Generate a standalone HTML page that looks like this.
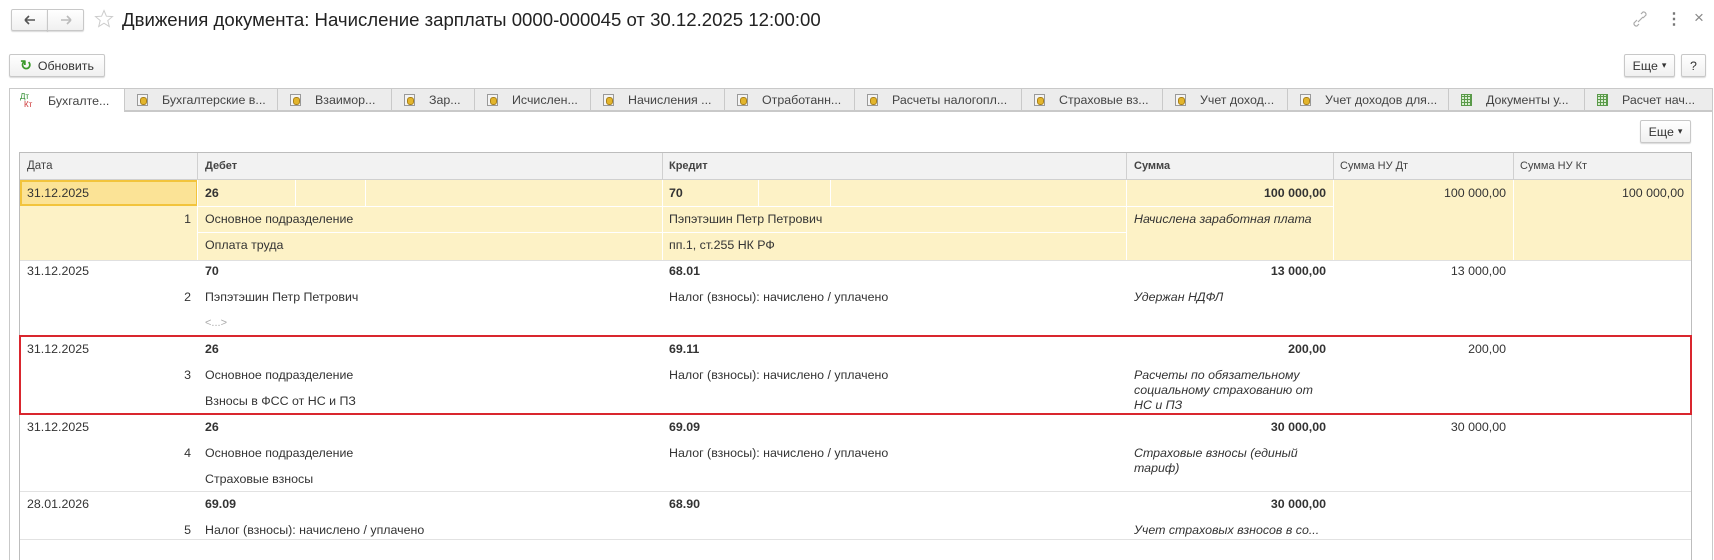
<!DOCTYPE html>
<html><head><meta charset="utf-8"><style>
*{box-sizing:border-box;margin:0;padding:0}
body{width:1714px;height:560px;overflow:hidden;background:#fff;font-family:"Liberation Sans",Arial,sans-serif;font-size:12.4px;color:#333;position:relative}
.a{position:absolute;white-space:nowrap}
.btn{position:absolute;border:1px solid #c8c8c8;border-radius:2px;background:linear-gradient(#fff,#f0f0f0);box-shadow:0 1px 1px rgba(0,0,0,.15);font-size:12.4px;color:#333;display:flex;align-items:center;justify-content:center}
.tab{position:absolute;top:88px;height:23px;background:#ececec;border:1px solid #c9c9c9;border-left:none;font-size:12.4px;color:#444;display:flex;align-items:center;padding-left:12px;white-space:nowrap;overflow:hidden}
.coin{width:11px;height:12px;border:1px solid #999;background:#f4f4f4;margin-right:14px;position:relative;flex:none}
.coin:after{content:"";position:absolute;left:2px;top:2px;width:5px;height:6px;border-radius:3px;background:#e3b52c;border:1px solid #a8801a}
.grid{width:11px;height:12px;margin-right:14px;flex:none;border:1px solid #5a9a4a;background:repeating-linear-gradient(90deg,transparent 0 2px,#5a9a4a 2px 3px),repeating-linear-gradient(0deg,#d8ecd0 0 2px,#5a9a4a 2px 3px)}
.hl{position:absolute;height:1px;background:#e2e2e2}
.vl{position:absolute;width:1px;background:#e2e2e2}
.b{font-weight:bold}
.i{font-style:italic}
.r{text-align:right}
</style></head><body>
<div class="btn" style="left:11px;top:9px;width:37px;height:22px;border-radius:2px 0 0 2px"><svg width="12" height="10"><path d="M1 5H11M1 5L5 1M1 5L5 9" stroke="#555" stroke-width="1.6" fill="none"/></svg></div>
<div class="btn" style="left:47px;top:9px;width:37px;height:22px;border-radius:0 2px 2px 0"><svg width="12" height="10"><path d="M1 5H11M11 5L7 1M11 5L7 9" stroke="#bbb" stroke-width="1.6" fill="none"/></svg></div>
<svg class="a" style="left:94px;top:9px" width="20" height="20"><path d="M10 1.5L12.4 7.2 18.5 7.6 13.8 11.5 15.3 17.5 10 14.2 4.7 17.5 6.2 11.5 1.5 7.6 7.6 7.2Z" fill="none" stroke="#ccc" stroke-width="1"/></svg>
<div class="a" style="left:122px;top:9px;font-size:18.6px;color:#222">Движения документа: Начисление зарплаты 0000-000045 от 30.12.2025 12:00:00</div>
<svg class="a" style="left:1633px;top:11px" width="14" height="16"><path d="M8 3l2-2a2.5 2.5 0 0 1 3 3l-3 3M6 13l-2 2a2.5 2.5 0 0 1-3-3l3-3M5 11l5-5" stroke="#aaa" stroke-width="1.2" fill="none"/></svg>
<div class="a" style="left:1666px;top:9px;font-size:16px;color:#777;font-weight:bold">⋮</div>
<div class="a" style="left:1694px;top:8px;font-size:17px;color:#888">×</div>
<div class="btn" style="left:9px;top:54px;width:96px;height:23px"><span style="color:#3a9a2a;font-weight:bold;margin-right:6px;font-size:14px">↻</span>Обновить</div>
<div class="btn" style="left:1624px;top:54px;width:51px;height:23px">Еще <span style="font-size:9px;margin-left:4px">▾</span></div>
<div class="btn" style="left:1681px;top:54px;width:25px;height:23px">?</div>
<div class="a" style="left:9px;top:111px;width:1704px;height:1px;background:#c9c9c9"></div>
<div class="a" style="left:9px;top:88px;width:1px;height:472px;background:#c9c9c9"></div>
<div class="a" style="left:1712px;top:111px;width:1px;height:449px;background:#c9c9c9"></div>
<div class="tab" style="left:9px;width:116px;background:#fff;border-left:1px solid #c9c9c9;border-bottom:none;height:24px;padding-left:10px"><span style="display:inline-block;width:24px;font-size:8px;line-height:8px;margin-right:4px"><span style="color:#2a8a2a">Дт</span><br><span style="color:#c33;margin-left:4px">Кт</span></span>Бухгалте...</div>
<div class="tab" style="left:125px;width:153px"><i class="coin"></i>Бухгалтерские в...</div>
<div class="tab" style="left:278px;width:114px"><i class="coin"></i>Взаимор...</div>
<div class="tab" style="left:392px;width:83px"><i class="coin"></i>Зар...</div>
<div class="tab" style="left:475px;width:116px"><i class="coin"></i>Исчислен...</div>
<div class="tab" style="left:591px;width:134px"><i class="coin"></i>Начисления ...</div>
<div class="tab" style="left:725px;width:130px"><i class="coin"></i>Отработанн...</div>
<div class="tab" style="left:855px;width:167px"><i class="coin"></i>Расчеты налогопл...</div>
<div class="tab" style="left:1022px;width:141px"><i class="coin"></i>Страховые вз...</div>
<div class="tab" style="left:1163px;width:125px"><i class="coin"></i>Учет доход...</div>
<div class="tab" style="left:1288px;width:161px"><i class="coin"></i>Учет доходов для...</div>
<div class="tab" style="left:1449px;width:136px"><i class="grid"></i>Документы у...</div>
<div class="tab" style="left:1585px;width:128px"><i class="grid"></i>Расчет нач...</div>
<div class="btn" style="left:1640px;top:120px;width:51px;height:23px">Еще <span style="font-size:9px;margin-left:4px">▾</span></div>
<div class="a" style="left:19px;top:152px;width:1673px;height:408px;border:1px solid #bdbdbd;border-bottom:none"></div>
<div class="a" style="left:20px;top:153px;width:1671px;height:27px;background:#f2f2f2;border-bottom:1px solid #d0d0d0"></div>
<div class="a" style="left:20px;top:180px;width:1671px;height:80px;background:#fdf2c6"></div>
<div class="a" style="left:20px;top:180px;width:178px;height:26px;background:#fbe396;border:2px solid #f2c43c"></div>
<div class="vl" style="left:197px;top:153px;height:27px;background:#d0d0d0"></div>
<div class="vl" style="left:662px;top:153px;height:27px;background:#d0d0d0"></div>
<div class="vl" style="left:1126px;top:153px;height:27px;background:#d0d0d0"></div>
<div class="vl" style="left:1333px;top:153px;height:27px;background:#d0d0d0"></div>
<div class="vl" style="left:1513px;top:153px;height:27px;background:#d0d0d0"></div>
<div class="a" style="left:27px;top:160px;font-size:11.5px;color:#444">Дата</div>
<div class="a b" style="left:205px;top:160px;font-size:11px;color:#444">Дебет</div>
<div class="a b" style="left:669px;top:160px;font-size:11px;color:#444">Кредит</div>
<div class="a b" style="left:1134px;top:160px;font-size:11px;color:#444">Сумма</div>
<div class="a" style="left:1340px;top:160px;font-size:11px;color:#444">Сумма НУ Дт</div>
<div class="a" style="left:1520px;top:160px;font-size:11px;color:#444">Сумма НУ Кт</div>
<div class="vl" style="left:197px;top:180px;height:80px;background:#fff"></div>
<div class="vl" style="left:662px;top:180px;height:80px;background:#fff"></div>
<div class="vl" style="left:1126px;top:180px;height:80px;background:#fff"></div>
<div class="vl" style="left:1333px;top:180px;height:80px;background:#fff"></div>
<div class="vl" style="left:1513px;top:180px;height:80px;background:#fff"></div>
<div class="vl" style="left:295px;top:180px;height:26px;background:#fff"></div>
<div class="vl" style="left:365px;top:180px;height:26px;background:#fff"></div>
<div class="vl" style="left:758px;top:180px;height:26px;background:#fff"></div>
<div class="vl" style="left:830px;top:180px;height:26px;background:#fff"></div>
<div class="hl" style="left:198px;top:206px;width:1135px;background:#fff"></div>
<div class="hl" style="left:198px;top:232px;width:928px;background:#fff"></div>
<div class="hl" style="left:20px;top:260px;width:1671px;background:#e0e0e0"></div>
<div class="hl" style="left:20px;top:336px;width:1671px"></div>
<div class="hl" style="left:20px;top:414px;width:1671px"></div>
<div class="hl" style="left:20px;top:491px;width:1671px"></div>
<div class="hl" style="left:20px;top:539px;width:1671px"></div>
<div class="a" style="left:27px;top:186px">31.12.2025</div>
<div class="a b" style="left:205px;top:186px">26</div>
<div class="a b" style="left:669px;top:186px">70</div>
<div class="a b r" style="left:1126px;top:186px;width:200px">100 000,00</div>
<div class="a r" style="left:1333px;top:186px;width:173px">100 000,00</div>
<div class="a r" style="left:1513px;top:186px;width:171px">100 000,00</div>
<div class="a r" style="left:20px;top:212px;width:171px">1</div>
<div class="a" style="left:205px;top:212px">Основное подразделение</div>
<div class="a" style="left:669px;top:212px">Пэпэтэшин Петр Петрович</div>
<div class="a i" style="left:1134px;top:212px">Начислена заработная плата</div>
<div class="a" style="left:205px;top:238px">Оплата труда</div>
<div class="a" style="left:669px;top:238px">пп.1, ст.255 НК РФ</div>
<div class="a" style="left:27px;top:264px">31.12.2025</div>
<div class="a b" style="left:205px;top:264px">70</div>
<div class="a b" style="left:669px;top:264px">68.01</div>
<div class="a b r" style="left:1126px;top:264px;width:200px">13 000,00</div>
<div class="a r" style="left:1333px;top:264px;width:173px">13 000,00</div>
<div class="a r" style="left:20px;top:290px;width:171px">2</div>
<div class="a" style="left:205px;top:290px">Пэпэтэшин Петр Петрович</div>
<div class="a" style="left:669px;top:290px">Налог (взносы): начислено / уплачено</div>
<div class="a i" style="left:1134px;top:290px">Удержан НДФЛ</div>
<div class="a" style="left:205px;top:317px;color:#aaa;font-size:11px">&lt;...&gt;</div>
<div class="a" style="left:27px;top:342px">31.12.2025</div>
<div class="a b" style="left:205px;top:342px">26</div>
<div class="a b" style="left:669px;top:342px">69.11</div>
<div class="a b r" style="left:1126px;top:342px;width:200px">200,00</div>
<div class="a r" style="left:1333px;top:342px;width:173px">200,00</div>
<div class="a r" style="left:20px;top:368px;width:171px">3</div>
<div class="a" style="left:205px;top:368px">Основное подразделение</div>
<div class="a" style="left:669px;top:368px">Налог (взносы): начислено / уплачено</div>
<div class="a i" style="left:1134px;top:368px;line-height:15px;white-space:normal;width:190px">Расчеты по обязательному социальному страхованию от НС и ПЗ</div>
<div class="a" style="left:205px;top:394px">Взносы в ФСС от НС и ПЗ</div>
<div class="a" style="left:19px;top:335px;width:1673px;height:80px;border:2.5px solid #d9262e"></div>
<div class="a" style="left:27px;top:420px">31.12.2025</div>
<div class="a b" style="left:205px;top:420px">26</div>
<div class="a b" style="left:669px;top:420px">69.09</div>
<div class="a b r" style="left:1126px;top:420px;width:200px">30 000,00</div>
<div class="a r" style="left:1333px;top:420px;width:173px">30 000,00</div>
<div class="a r" style="left:20px;top:446px;width:171px">4</div>
<div class="a" style="left:205px;top:446px">Основное подразделение</div>
<div class="a" style="left:669px;top:446px">Налог (взносы): начислено / уплачено</div>
<div class="a i" style="left:1134px;top:446px;line-height:15px;white-space:normal;width:190px">Страховые взносы (единый тариф)</div>
<div class="a" style="left:205px;top:472px">Страховые взносы</div>
<div class="a" style="left:27px;top:497px">28.01.2026</div>
<div class="a b" style="left:205px;top:497px">69.09</div>
<div class="a b" style="left:669px;top:497px">68.90</div>
<div class="a b r" style="left:1126px;top:497px;width:200px">30 000,00</div>
<div class="a r" style="left:20px;top:523px;width:171px">5</div>
<div class="a" style="left:205px;top:523px">Налог (взносы): начислено / уплачено</div>
<div class="a i" style="left:1134px;top:523px">Учет страховых взносов в со...</div>
</body></html>
